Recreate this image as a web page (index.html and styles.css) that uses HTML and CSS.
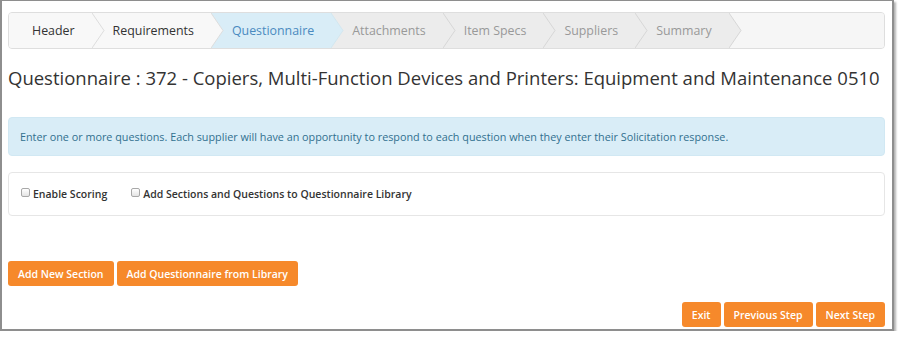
FILE: index.html
```html
<!DOCTYPE html>
<html lang="en">
<head>
    <meta charset="UTF-8">
    <meta name="viewport" content="width=device-width, initial-scale=1.0">
    <title>Questionnaire</title>
    <link rel="stylesheet" href="styles.css">
</head>
<body>
    <div class="window">
        <div class="wizard">
            <div class="step done first">Header</div>
            <svg class="sep" viewBox="0 0 13 37" preserveAspectRatio="none"><rect width="13" height="37" fill="#f8f8f8"/><polygon points="0,0 12,18.5 0,37" fill="#f8f8f8"/><polyline points="0,0 12,18.5 0,37" fill="none" stroke="#dcdcdc"/></svg>
            <div class="step done">Requirements</div>
            <svg class="sep" viewBox="0 0 13 37" preserveAspectRatio="none"><rect width="13" height="37" fill="#d9edf7"/><polygon points="0,0 12,18.5 0,37" fill="#f8f8f8"/><polyline points="0,0 12,18.5 0,37" fill="none" stroke="#dcdcdc"/></svg>
            <div class="step active">Questionnaire</div>
            <svg class="sep" viewBox="0 0 13 37" preserveAspectRatio="none"><rect width="13" height="37" fill="#ececec"/><polygon points="0,0 12,18.5 0,37" fill="#d9edf7"/><polyline points="0,0 12,18.5 0,37" fill="none" stroke="#d3e6ef"/></svg>
            <div class="step todo">Attachments</div>
            <svg class="sep" viewBox="0 0 13 37" preserveAspectRatio="none"><rect width="13" height="37" fill="#ececec"/><polygon points="0,0 12,18.5 0,37" fill="#ececec"/><polyline points="0,0 12,18.5 0,37" fill="none" stroke="#d6d6d6"/></svg>
            <div class="step todo">Item Specs</div>
            <svg class="sep" viewBox="0 0 13 37" preserveAspectRatio="none"><rect width="13" height="37" fill="#ececec"/><polygon points="0,0 12,18.5 0,37" fill="#ececec"/><polyline points="0,0 12,18.5 0,37" fill="none" stroke="#d6d6d6"/></svg>
            <div class="step todo">Suppliers</div>
            <svg class="sep" viewBox="0 0 13 37" preserveAspectRatio="none"><rect width="13" height="37" fill="#ececec"/><polygon points="0,0 12,18.5 0,37" fill="#ececec"/><polyline points="0,0 12,18.5 0,37" fill="none" stroke="#d6d6d6"/></svg>
            <div class="step todo">Summary</div>
            <svg class="sep" viewBox="0 0 13 37" preserveAspectRatio="none"><rect width="13" height="37" fill="#f6f6f6"/><polygon points="0,0 12,18.5 0,37" fill="#ececec"/><polyline points="0,0 12,18.5 0,37" fill="none" stroke="#d6d6d6"/></svg>
            <div class="step rest"></div>
        </div>

        <h1 class="page-title">Questionnaire : 372 - Copiers, Multi-Function Devices and Printers: Equipment and Maintenance 0510</h1>

        <div class="alert-info">Enter one or more questions. Each supplier will have an opportunity to respond to each question when they enter their Solicitation response.</div>

        <div class="panel">
            <label class="check"><input type="checkbox"> Enable Scoring</label>
            <label class="check"><input type="checkbox"> Add Sections and Questions to Questionnaire Library</label>
        </div>

        <div class="actions">
            <a href="#" class="btn">Add New Section</a>
            <a href="#" class="btn">Add Questionnaire from Library</a>
        </div>

        <div class="actions nav">
            <a href="#" class="btn">Exit</a>
            <a href="#" class="btn">Previous Step</a>
            <a href="#" class="btn">Next Step</a>
        </div>
    </div>
</body>
</html>
```

FILE: styles.css
```css
body {
    margin: 0;
    padding: 0;
    font-family: "Open Sans", Arial, sans-serif;
    background: white;
}
.window {
    box-sizing: border-box;
    width: 894px;
    height: 331px;
    border-style: solid;
    border-color: #8e8e8e;
    border-width: 1px 2px 2px 2px;
    box-shadow: 2px 2px 2px rgba(0, 0, 0, 0.3);
    padding: 11px 7px 0 6px;
    background: white;
    color: #333;
}
.wizard {
    display: flex;
    height: 37px;
    border: 1px solid #dedede;
    border-radius: 4px;
    overflow: hidden;
    background: #f6f6f6;
    box-sizing: border-box;
}
.step {
    display: flex;
    align-items: center;
    font-size: 12.4px;
    padding: 0 17px 0 8px;
    white-space: nowrap;
}
.step.first {
    padding-left: 23px;
}
.sep {
    flex: none;
    width: 13px;
    height: 35px;
    display: block;
}
.done {
    background: #f8f8f8;
    color: #333;
}
.active {
    background: #d9edf7;
    color: #4a8ac0;
}
.todo {
    background: #ececec;
    color: #999;
}
.rest {
    flex: 1;
    background: #f6f6f6;
}
.page-title {
    font-size: 18.5px;
    font-weight: normal;
    line-height: 22px;
    margin: 18px 0 28px;
    color: #333;
    white-space: nowrap;
}
.alert-info {
    background: #d9edf7;
    border: 1px solid #d1e8f3;
    border-radius: 4px;
    color: #31708f;
    font-size: 10.8px;
    line-height: 15px;
    padding: 11px 11px;
}
.panel {
    margin-top: 16px;
    height: 44px;
    box-sizing: border-box;
    border: 1px solid #e6e6e6;
    border-radius: 4px;
    display: flex;
    align-items: center;
    gap: 24px;
    padding: 0 12px;
}
.check {
    display: flex;
    align-items: center;
    gap: 3px;
    font-size: 10.5px;
    font-weight: 600;
    color: #333;
}
.check input {
    appearance: none;
    margin: 0 0 3px;
    width: 9px;
    height: 9px;
    border: 1px solid #a8a8a8;
    border-radius: 2px;
    background: linear-gradient(#fff, #e4e4e4);
}
.actions {
    display: flex;
    gap: 3px;
    margin-top: 45px;
}
.actions.nav {
    justify-content: flex-end;
    margin-top: 16px;
    gap: 3px;
}
.btn {
    display: inline-flex;
    align-items: center;
    height: 25px;
    padding: 0 10px;
    background: #f6892b;
    border-radius: 3px;
    color: white;
    text-decoration: none;
    font-size: 10.5px;
    font-weight: 600;
}
```
